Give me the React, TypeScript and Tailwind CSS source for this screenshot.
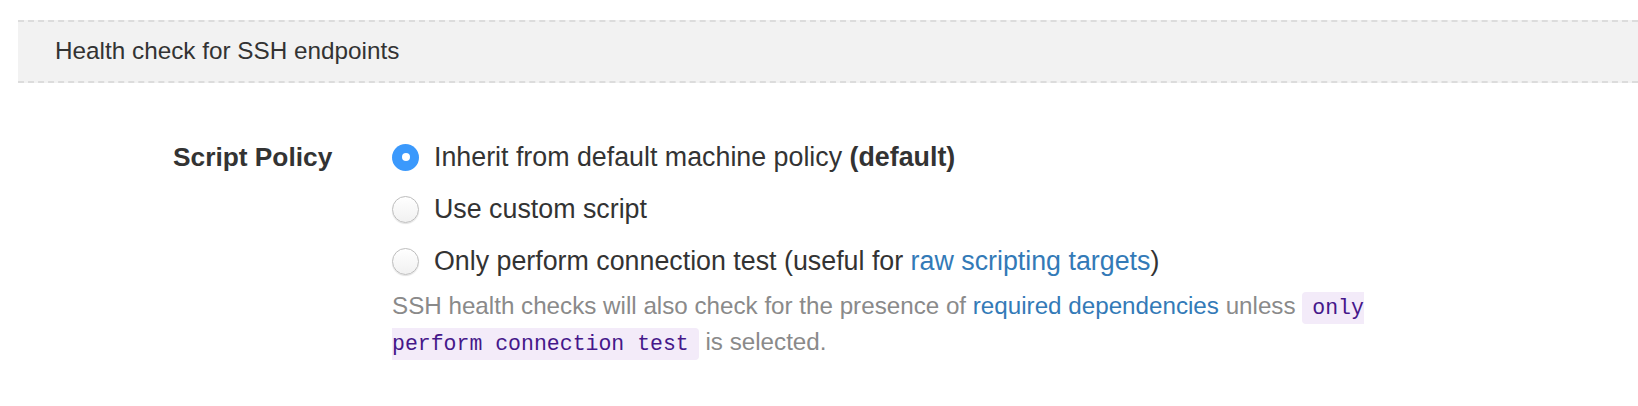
import React from "react";

type RadioOptionProps = {
  checked?: boolean;
  children: React.ReactNode;
};

function RadioOption({ checked = false, children }: RadioOptionProps) {
  return (
    <label className="flex h-[36px] items-center gap-[15px]">
      {checked ? (
        <span className="flex h-[27px] w-[27px] shrink-0 items-center justify-center rounded-full bg-[#3b99fc]">
          <span className="h-[8px] w-[8px] rounded-full bg-white" />
        </span>
      ) : (
        <span className="h-[27px] w-[27px] shrink-0 rounded-full border border-[#bdbdbd] bg-gradient-to-b from-white to-[#f1f1f1] shadow-[0_1px_1px_rgba(0,0,0,0.12)]" />
      )}
      <span>{children}</span>
    </label>
  );
}

export default function App() {
  return (
    <div className="h-[406px] w-[1638px] overflow-hidden bg-white pt-5 font-['Liberation_Sans',Arial,sans-serif] text-[#333]">
      <div className="ml-[18px] flex h-[63px] items-center border-y-2 border-dashed border-[#dcdcdc] bg-[#f2f2f2] pl-[37px] text-[24.3px]">
        Health check for SSH endpoints
      </div>

      <div className="mt-[56px] flex pl-[173px]">
        <div className="w-[219px] text-[26.3px] leading-[36px] font-bold">
          Script Policy
        </div>

        <div className="text-[26.8px] leading-[36px]">
          <div className="flex flex-col gap-4">
            <RadioOption checked>
              Inherit from default machine policy <b>(default)</b>
            </RadioOption>
            <RadioOption>Use custom script</RadioOption>
            <RadioOption>
              Only perform connection test (useful for{" "}
              <a href="#" className="text-[#337ab7]">
                raw scripting targets
              </a>
              )
            </RadioOption>
          </div>

          <p className="mt-[10px] w-[1000px] text-[24.2px] leading-[33px] text-[#8a8a8a]">
            SSH health checks will also check for the presence of{" "}
            <a href="#" className="text-[#337ab7]">
              required dependencies
            </a>{" "}
            unless{" "}
            <code className="rounded-[4px] bg-[#f3ebf9] px-[10px] py-[4px] font-['Liberation_Mono',monospace] text-[21.5px] text-[#45178a]">
              only perform connection test
            </code>{" "}
            is selected.
          </p>
        </div>
      </div>
    </div>
  );
}
